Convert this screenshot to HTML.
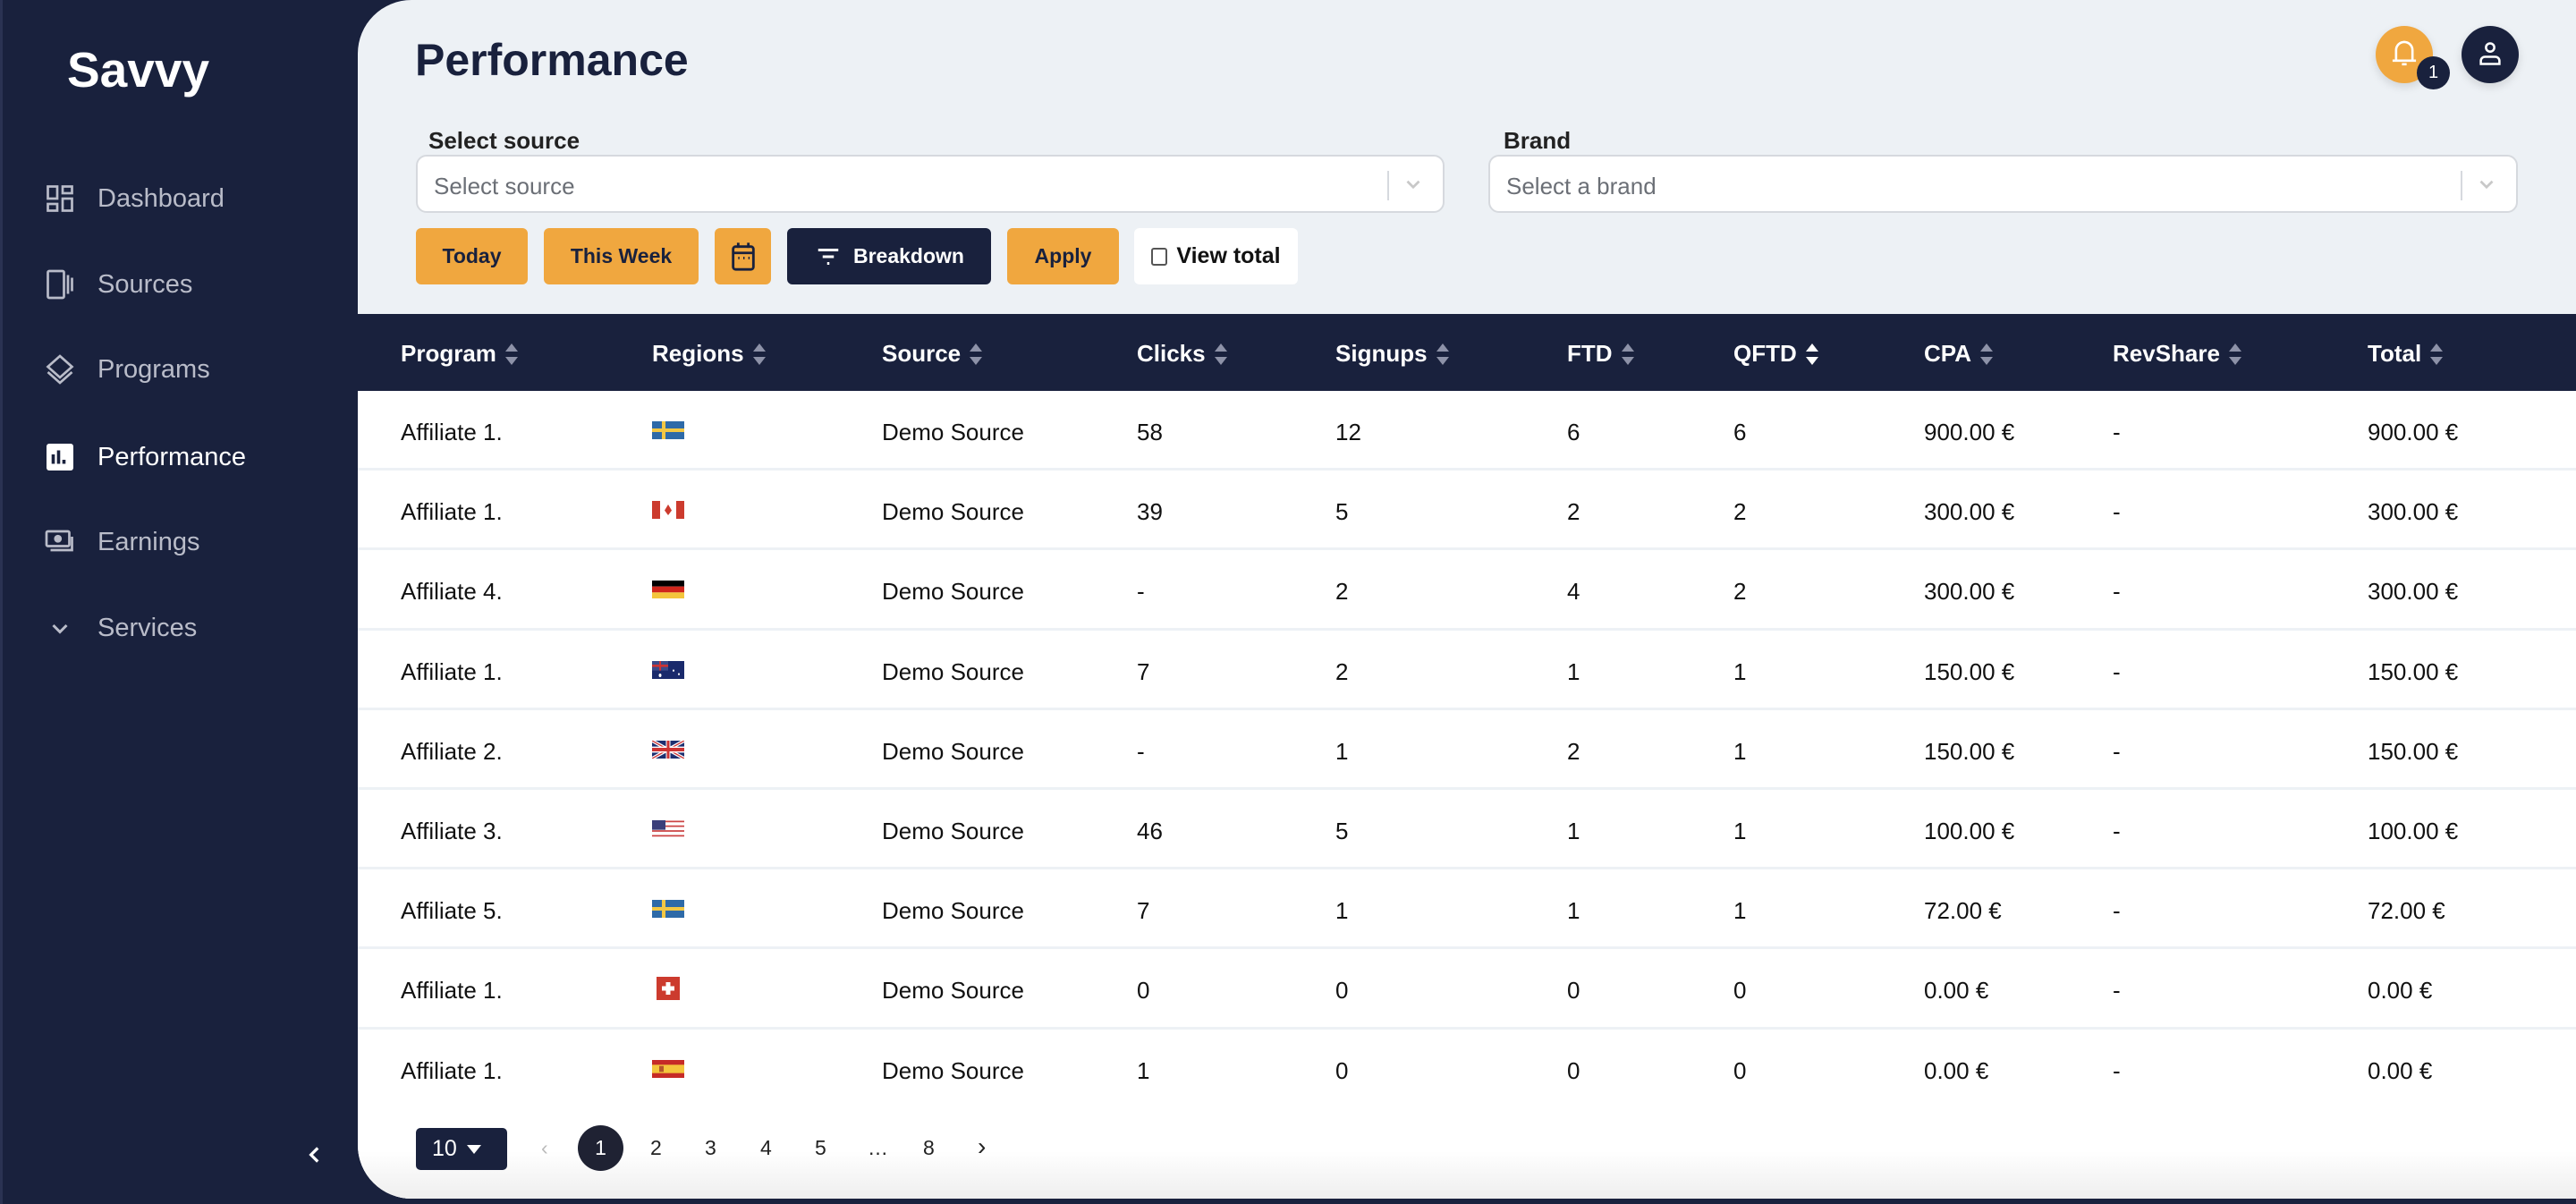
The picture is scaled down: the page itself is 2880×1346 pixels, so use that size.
<!DOCTYPE html>
<html><head><meta charset="utf-8"><style>
*{box-sizing:border-box;margin:0;padding:0}
body{width:2880px;height:1346px;background:#19213d;font-family:"Liberation Sans",sans-serif;overflow:hidden;position:relative}
.side{position:absolute;left:0;top:0;width:400px;height:1346px;background:#19213d;border-left:3px solid #2a3252}
.logo{position:absolute;left:72px;top:46px;color:#fff;font-weight:bold;font-size:55px}
.nav{position:absolute;left:46px;display:flex;align-items:center;color:#b9bcc9;font-size:29px}
.nav svg{width:36px;height:36px;margin-right:24px}
.nav.act{color:#fff}
.main{position:absolute;left:400px;top:0;width:2480px;height:1340px;background:#edf1f5;border-radius:60px 0 0 60px;overflow:hidden}
h1{position:absolute;left:64px;top:38px;font-size:50px;color:#19213d;font-weight:bold}
.lbl{position:absolute;font-size:26px;font-weight:bold;color:#222}
.inp{position:absolute;height:65px;background:#fff;border:2px solid #d6d9de;border-radius:12px;font-size:26px;color:#6b6f76;padding:18px 18px}
.inp .sep{position:absolute;right:60px;top:16px;width:2px;height:33px;background:#d6d9de}
.inp .car{position:absolute;right:20px;top:18px}
.btn{position:absolute;top:255px;height:63px;border-radius:6px;background:#f0a73f;color:#19213d;font-weight:bold;font-size:23px;display:flex;align-items:center;justify-content:center}
.thead{position:absolute;left:0;top:351px;width:2480px;height:86px;background:#19213d}
.th{position:absolute;top:29px;color:#fff;font-weight:bold;font-size:26px;display:flex;align-items:center}
.th i{display:inline-block;margin-left:10px;width:14px;height:26px;position:relative}
.th i:before{content:"";position:absolute;top:1px;left:0;border:7px solid transparent;border-bottom:9px solid #8d92a8;border-top:0}
.th i:after{content:"";position:absolute;bottom:1px;left:0;border:7px solid transparent;border-top:9px solid #8d92a8;border-bottom:0}
.rows{position:absolute;left:0;top:437px;width:2480px;height:903px;background:#fff}
.row{position:relative;height:89.2px;border-bottom:3px solid #edf1f5;font-size:26px;color:#111}
.row span{position:absolute;top:31px}
.row svg{position:absolute;left:329px;top:34px}
.pg{position:absolute;top:1270px;font-size:23px;color:#222}
</style></head><body>
<div class="side">
<div class="logo">Savvy</div>
<div class="nav" style="top:204px"><svg viewBox="0 0 24 24" fill="none" stroke="#b9bcc9" stroke-width="1.8"><rect x="3" y="3" width="7" height="9"/><rect x="14" y="3" width="7" height="5"/><rect x="14" y="12" width="7" height="9"/><rect x="3" y="16" width="7" height="5"/></svg>Dashboard</div>
<div class="nav" style="top:300px"><svg viewBox="0 0 24 24" fill="none" stroke="#b9bcc9" stroke-width="1.8"><rect x="3" y="2" width="12" height="20" rx="1"/><path d="M18 5v14M21 7v10"/></svg>Sources</div>
<div class="nav" style="top:395px"><svg viewBox="0 0 24 24" fill="none" stroke="#b9bcc9" stroke-width="1.8"><path d="M12 2l9 8-9 8-9-8z"/><path d="M3 14l9 8 9-8"/></svg>Programs</div>
<div class="nav act" style="top:493px"><svg viewBox="0 0 24 24"><rect x="2" y="2" width="20" height="20" rx="2" fill="#fff"/><path d="M7 17V10M11 17V7M15 17v-3" stroke="#19213d" stroke-width="2.4"/></svg>Performance</div>
<div class="nav" style="top:588px"><svg viewBox="0 0 24 24" fill="none" stroke="#b9bcc9" stroke-width="1.8"><rect x="2" y="4" width="17" height="11" rx="1"/><circle cx="10.5" cy="9.5" r="2" fill="#b9bcc9"/><path d="M5 18h16V8"/></svg>Earnings</div>
<div class="nav" style="top:684px"><svg viewBox="0 0 24 24" fill="none" stroke="#b9bcc9" stroke-width="2"><path d="M7 10l5 5 5-5"/></svg>Services</div>
<svg style="position:absolute;left:336px;top:1278px" width="26" height="26" viewBox="0 0 24 24" fill="none" stroke="#fff" stroke-width="3"><path d="M15 5l-7 7 7 7"/></svg>
</div>
<div class="main">
<h1>Performance</h1>
<div style="position:absolute;left:2256px;top:29px;width:64px;height:64px;border-radius:50%;background:#f0a73f;box-shadow:0 4px 10px rgba(0,0,0,.12)"><svg style="position:absolute;left:16px;top:14px" width="32" height="34" viewBox="0 0 24 26" fill="none" stroke="#fff" stroke-width="2"><path d="M5 19V10a7 7 0 0114 0v9M2 19h20M10 22h4M12 2v1"/></svg></div>
<div style="position:absolute;left:2302px;top:63px;width:37px;height:37px;border-radius:50%;background:#19213d;color:#fff;font-size:20px;text-align:center;line-height:37px">1</div>
<div style="position:absolute;left:2352px;top:29px;width:64px;height:64px;border-radius:50%;background:#19213d;box-shadow:0 4px 10px rgba(0,0,0,.12)"><svg style="position:absolute;left:18px;top:16px" width="28" height="30" viewBox="0 0 24 26" fill="none" stroke="#fff" stroke-width="2.2"><circle cx="12" cy="7" r="4"/><path d="M3 23v-3a4 4 0 014-4h10a4 4 0 014 4v3z"/></svg></div>
<div class="lbl" style="left:79px;top:142px">Select source</div>
<div class="inp" style="left:65px;top:173px;width:1150px">Select source<div class="sep"></div><svg class="car" width="26" height="26" viewBox="0 0 24 24" fill="none" stroke="#c8c8c8" stroke-width="2.5"><path d="M6 9l6 6 6-6"/></svg></div>
<div class="lbl" style="left:1281px;top:142px">Brand</div>
<div class="inp" style="left:1264px;top:173px;width:1151px">Select a brand<div class="sep"></div><svg class="car" width="26" height="26" viewBox="0 0 24 24" fill="none" stroke="#c8c8c8" stroke-width="2.5"><path d="M6 9l6 6 6-6"/></svg></div>
<div class="btn" style="left:65px;width:125px">Today</div>
<div class="btn" style="left:208px;width:173px">This Week</div>
<div class="btn" style="left:399px;width:63px"><svg width="30" height="34" viewBox="0 0 20 24" fill="none" stroke="#19213d" stroke-width="2"><rect x="2" y="4" width="16" height="18" rx="2"/><path d="M2 9h16M6 1v4M14 1v4M6 13h1M10 13h1M14 13h1"/></svg></div>
<div class="btn" style="left:480px;width:228px;background:#19213d;color:#fff"><svg width="32" height="30" viewBox="0 0 24 24" fill="none" stroke="#fff" stroke-width="2.4" style="margin-right:12px"><path d="M3 6h18M7 12h10M11 18h2"/></svg>Breakdown</div>
<div class="btn" style="left:726px;width:125px">Apply</div>
<div class="btn" style="left:868px;width:183px;background:#fff;color:#111;font-size:25px"><span style="display:inline-block;width:18px;height:20px;border:2px solid #555;border-radius:3px;margin-right:10px"></span>View total</div>
<div class="thead">
<div class="th" style="left:48px">Program<i></i></div>
<div class="th" style="left:329px">Regions<i></i></div>
<div class="th" style="left:586px">Source<i></i></div>
<div class="th" style="left:871px">Clicks<i></i></div>
<div class="th" style="left:1093px">Signups<i></i></div>
<div class="th" style="left:1352px">FTD<i></i></div>
<div class="th" style="left:1538px">QFTD<i style="filter:brightness(2)"></i></div>
<div class="th" style="left:1751px">CPA<i></i></div>
<div class="th" style="left:1962px">RevShare<i></i></div>
<div class="th" style="left:2247px">Total<i></i></div>
</div>
<div class="rows">
<div class="row"><span style="left:48px">Affiliate 1.</span><svg width="36" height="20" viewBox="0 0 36 15" preserveAspectRatio="none"><rect width="36" height="15" fill="#2e6aa8"/><rect x="11" width="4" height="15" fill="#f2c744"/><rect y="6" width="36" height="3" fill="#f2c744"/></svg><span style="left:586px">Demo Source</span><span style="left:871px">58</span><span style="left:1093px">12</span><span style="left:1352px">6</span><span style="left:1538px">6</span><span style="left:1751px">900.00 €</span><span style="left:1962px">-</span><span style="left:2247px">900.00 €</span></div>
<div class="row"><span style="left:48px">Affiliate 1.</span><svg width="36" height="20" viewBox="0 0 36 15" preserveAspectRatio="none"><rect width="36" height="15" fill="#fff"/><rect width="9" height="15" fill="#cc3b2e"/><rect x="27" width="9" height="15" fill="#cc3b2e"/><path d="M18 3l4 5-4 4-4-4z" fill="#cc3b2e"/></svg><span style="left:586px">Demo Source</span><span style="left:871px">39</span><span style="left:1093px">5</span><span style="left:1352px">2</span><span style="left:1538px">2</span><span style="left:1751px">300.00 €</span><span style="left:1962px">-</span><span style="left:2247px">300.00 €</span></div>
<div class="row"><span style="left:48px">Affiliate 4.</span><svg width="36" height="20" viewBox="0 0 36 15" preserveAspectRatio="none"><rect width="36" height="5" fill="#000"/><rect y="5" width="36" height="5" fill="#d0261c"/><rect y="10" width="36" height="5" fill="#f4c53c"/></svg><span style="left:586px">Demo Source</span><span style="left:871px">-</span><span style="left:1093px">2</span><span style="left:1352px">4</span><span style="left:1538px">2</span><span style="left:1751px">300.00 €</span><span style="left:1962px">-</span><span style="left:2247px">300.00 €</span></div>
<div class="row"><span style="left:48px">Affiliate 1.</span><svg width="36" height="20" viewBox="0 0 36 15" preserveAspectRatio="none"><rect width="36" height="15" fill="#1a2a6c"/><rect width="18" height="8" fill="#3b4a88"/><path d="M0 4h18M9 0v8" stroke="#c33" stroke-width="2"/><circle cx="24" cy="8" r="1" fill="#fff"/><circle cx="30" cy="11" r="1" fill="#fff"/><circle cx="9" cy="12" r="1.5" fill="#fff"/></svg><span style="left:586px">Demo Source</span><span style="left:871px">7</span><span style="left:1093px">2</span><span style="left:1352px">1</span><span style="left:1538px">1</span><span style="left:1751px">150.00 €</span><span style="left:1962px">-</span><span style="left:2247px">150.00 €</span></div>
<div class="row"><span style="left:48px">Affiliate 2.</span><svg width="36" height="20" viewBox="0 0 36 15" preserveAspectRatio="none"><rect width="36" height="15" fill="#1d2f70"/><path d="M0 0l36 15M36 0L0 15" stroke="#fff" stroke-width="3"/><path d="M0 0l36 15M36 0L0 15" stroke="#c33" stroke-width="1"/><path d="M0 7.5h36M18 0v15" stroke="#fff" stroke-width="5"/><path d="M0 7.5h36M18 0v15" stroke="#c33" stroke-width="3"/></svg><span style="left:586px">Demo Source</span><span style="left:871px">-</span><span style="left:1093px">1</span><span style="left:1352px">2</span><span style="left:1538px">1</span><span style="left:1751px">150.00 €</span><span style="left:1962px">-</span><span style="left:2247px">150.00 €</span></div>
<div class="row"><span style="left:48px">Affiliate 3.</span><svg width="36" height="20" viewBox="0 0 36 15" preserveAspectRatio="none"><rect width="36" height="15" fill="#fff"/><path d="M0 1h36M0 5h36M0 9h36M0 13h36" stroke="#c44" stroke-width="1.3"/><rect width="15" height="8" fill="#3b3f7a"/></svg><span style="left:586px">Demo Source</span><span style="left:871px">46</span><span style="left:1093px">5</span><span style="left:1352px">1</span><span style="left:1538px">1</span><span style="left:1751px">100.00 €</span><span style="left:1962px">-</span><span style="left:2247px">100.00 €</span></div>
<div class="row"><span style="left:48px">Affiliate 5.</span><svg width="36" height="20" viewBox="0 0 36 15" preserveAspectRatio="none"><rect width="36" height="15" fill="#2e6aa8"/><rect x="11" width="4" height="15" fill="#f2c744"/><rect y="6" width="36" height="3" fill="#f2c744"/></svg><span style="left:586px">Demo Source</span><span style="left:871px">7</span><span style="left:1093px">1</span><span style="left:1352px">1</span><span style="left:1538px">1</span><span style="left:1751px">72.00 €</span><span style="left:1962px">-</span><span style="left:2247px">72.00 €</span></div>
<div class="row"><span style="left:48px">Affiliate 1.</span><svg width="26" height="26" style="left:334px;top:31px"><rect width="26" height="26" fill="#cc3b2e"/><path d="M13 6v14M6 13h14" stroke="#fff" stroke-width="5"/></svg><span style="left:586px">Demo Source</span><span style="left:871px">0</span><span style="left:1093px">0</span><span style="left:1352px">0</span><span style="left:1538px">0</span><span style="left:1751px">0.00 €</span><span style="left:1962px">-</span><span style="left:2247px">0.00 €</span></div>
<div class="row" style="border:0"><span style="left:48px">Affiliate 1.</span><svg width="36" height="20" viewBox="0 0 36 15" preserveAspectRatio="none"><rect width="36" height="15" fill="#c62b27"/><rect y="4" width="36" height="7" fill="#f4c53c"/><rect x="8" y="5" width="5" height="5" fill="#b5562a"/></svg><span style="left:586px">Demo Source</span><span style="left:871px">1</span><span style="left:1093px">0</span><span style="left:1352px">0</span><span style="left:1538px">0</span><span style="left:1751px">0.00 €</span><span style="left:1962px">-</span><span style="left:2247px">0.00 €</span></div>
<div style="position:absolute;left:0;top:850px;width:2480px;height:60px;background:linear-gradient(#fff,#ececec)"></div>
</div>
<div style="position:absolute;left:65px;top:1261px;width:102px;height:47px;border-radius:5px;background:#19213d;color:#fff;font-size:25px;line-height:47px;padding-left:18px">10 <span style="display:inline-block;border:8px solid transparent;border-top:10px solid #fff;border-bottom:0;vertical-align:middle;margin-left:4px"></span></div>
<div class="pg" style="left:205px;color:#bbb">‹</div>
<div style="position:absolute;left:246px;top:1258px;width:51px;height:51px;border-radius:50%;background:#1f2233;color:#fff;font-size:23px;text-align:center;line-height:51px">1</div>
<div class="pg" style="left:327px">2</div><div class="pg" style="left:388px">3</div><div class="pg" style="left:450px">4</div><div class="pg" style="left:511px">5</div><div class="pg" style="left:570px">…</div><div class="pg" style="left:632px">8</div><div class="pg" style="left:693px;font-size:28px;top:1266px">›</div>
</div>
</body></html>
